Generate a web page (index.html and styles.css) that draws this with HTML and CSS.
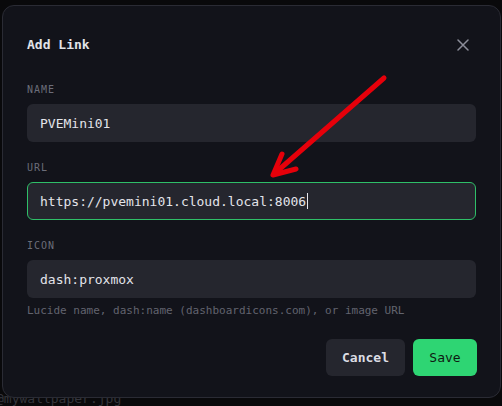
FILE: index.html
```html
<!DOCTYPE html>
<html>
<head>
<meta charset="utf-8">
<link rel="stylesheet" href="styles.css">
</head>
<body>
<div class="backdrop">
  <div class="bg-text">@mywallpaper.jpg</div>
</div>
<div class="modal">
  <div class="header">
    <h2 class="title">Add Link</h2>
    <svg class="close" width="12" height="12" viewBox="0 0 12 12"><path d="M1 1L11 11M11 1L1 11" stroke="#8b8d99" stroke-width="1.5" stroke-linecap="round"/></svg>
  </div>
  <div class="field first">
    <div class="label">NAME</div>
    <div class="input">PVEMini01</div>
  </div>
  <div class="field">
    <div class="label">URL</div>
    <div class="input focus">https://pvemini01.cloud.local:8006<span class="caret"></span></div>
  </div>
  <div class="field">
    <div class="label">ICON</div>
    <div class="input">dash:proxmox</div>
    <div class="help">Lucide name, dash:name (dashboardicons.com), or image URL</div>
  </div>
  <div class="actions">
    <button class="btn cancel">Cancel</button>
    <button class="btn save">Save</button>
  </div>
</div>
<svg class="arrow" width="502" height="406" viewBox="0 0 502 406">
  <g stroke="#e6000a" stroke-width="5" stroke-linecap="round" stroke-linejoin="round" fill="none">
    <path d="M384 78L274 174"/>
    <path d="M282 154L273 175L296 169"/>
  </g>
</svg>
</body>
</html>
```
FILE: styles.css
```css
* { box-sizing: border-box; }
html, body { margin: 0; padding: 0; }
body {
  width: 502px;
  height: 406px;
  background: #09090b;
  font-family: "DejaVu Sans Mono", "Liberation Mono", monospace;
  overflow: hidden;
  position: relative;
}
.backdrop { height: 406px; }
.bg-text {
  position: absolute;
  left: -4px;
  top: 391px;
  font-size: 13px;
  color: #34353b;
}
.modal {
  position: absolute;
  left: 2px;
  top: 5px;
  width: 499px;
  height: 393px;
  background: #12131a;
  border: 1px solid #2a2b34;
  border-radius: 12px;
  padding: 29px 24px 0 24px;
}
.header {
  display: flex;
  justify-content: space-between;
  align-items: center;
  height: 20px;
}
.title {
  margin: 0;
  font-size: 13px;
  font-weight: bold;
  color: #e2e3e8;
  line-height: 20px;
}
.close { margin-right: 7px; }
.field { margin-top: 18px; }
.field.first { margin-top: 27px; }
.label {
  font-size: 10px;
  letter-spacing: 1px;
  color: #6b6d79;
  line-height: 15px;
  margin-bottom: 7px;
}
.input {
  height: 38px;
  background: #25262e;
  border: 1px solid transparent;
  border-radius: 6px;
  padding: 0 12px;
  display: flex;
  align-items: center;
  font-size: 13px;
  color: #e3e4ea;
}
.input.focus { border-color: #2fbf68; }
.caret {
  display: inline-block;
  width: 1px;
  height: 16px;
  background: #e8e8ee;
  margin-left: 1px;
}
.help {
  margin-top: 6px;
  font-size: 11px;
  line-height: 14px;
  color: #62646f;
}
.actions {
  display: flex;
  justify-content: flex-end;
  gap: 8px;
  margin-top: 21px;
  margin-right: -1px;
}
.btn {
  height: 37px;
  border: none;
  border-radius: 6px;
  font-family: "DejaVu Sans Mono", "Liberation Mono", monospace;
  font-size: 13px;
  padding: 0 16px;
}
.cancel {
  background: #25262e;
  color: #dcdde3;
  font-weight: bold;
  width: 79px;
}
.save {
  background: #2ed573;
  color: #0e1a12;
  width: 64px;
}
.arrow {
  position: absolute;
  left: 0;
  top: 0;
  pointer-events: none;
}
```
